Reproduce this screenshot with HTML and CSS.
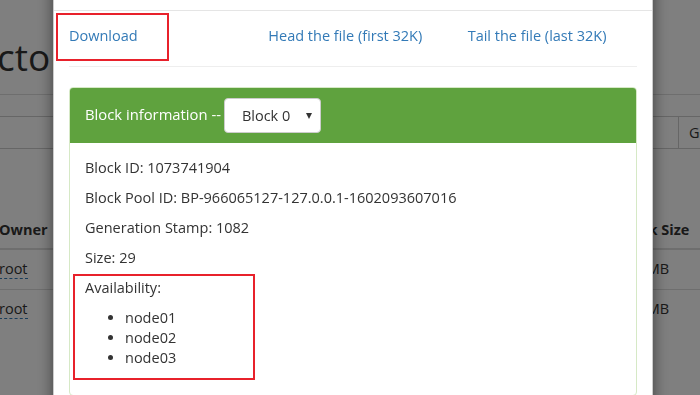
FILE: index.html
```html
<!DOCTYPE html>
<html lang="en">
<head>
<meta charset="UTF-8">
<meta name="viewport" content="width=device-width, initial-scale=1.0">
<link rel="stylesheet" href="styles.css">
<title>Browsing HDFS</title>
</head>
<body>
<div class="page">
  <div class="page-header">
    <h1>Browse Directory</h1>
  </div>
  <div class="search">
    <input class="search-input" type="text">
    <button class="search-go">Go!</button>
  </div>
  <table class="listing">
    <thead>
      <tr>
        <th class="col-perm">Permission</th>
        <th class="col-owner">Owner</th>
        <th class="col-group">Group</th>
        <th class="col-size">Size</th>
        <th class="col-mod">Last Modified</th>
        <th class="col-repl">Replication</th>
        <th class="col-block">Block Size</th>
        <th class="col-name">Name</th>
      </tr>
    </thead>
    <tbody>
      <tr>
        <td>-rw-r--r--</td>
        <td><span class="owner">root</span></td>
        <td>supergroup</td>
        <td>29 B</td>
        <td>Oct 08 01:22</td>
        <td>3</td>
        <td>128 MB</td>
        <td>a.txt</td>
      </tr>
      <tr>
        <td>-rw-r--r--</td>
        <td><span class="owner">root</span></td>
        <td>supergroup</td>
        <td>17 B</td>
        <td>Oct 08 01:20</td>
        <td>3</td>
        <td>128 MB</td>
        <td>b.txt</td>
      </tr>
    </tbody>
  </table>
</div>

<div class="backdrop"></div>

<div class="modal">
  <div class="modal-header">
    <span class="modal-close">&times;</span>
    <h4 class="modal-title">File information - a.txt</h4>
  </div>
  <div class="modal-body">
    <div class="links">
      <div class="links-col">
        <div class="mark-link"><a href="#">Download</a></div>
      </div>
      <div class="links-col"><a href="#">Head the file (first 32K)</a></div>
      <div class="links-col"><a href="#">Tail the file (last 32K)</a></div>
    </div>
    <hr>
    <div class="panel">
      <div class="panel-heading">
        <span class="panel-title">Block information --</span>
        <span class="select-wrap">
          <select class="block-select">
            <option>Block 0</option>
          </select>
        </span>
      </div>
      <div class="panel-body">
        <p>Block ID: 1073741904</p>
        <p>Block Pool ID: BP-966065127-127.0.0.1-1602093607016</p>
        <p>Generation Stamp: 1082</p>
        <p>Size: 29</p>
        <div class="mark-box">
          <p>Availability:</p>
          <ul>
            <li>node01</li>
            <li>node02</li>
            <li>node03</li>
          </ul>
        </div>
      </div>
    </div>
  </div>
</div>
</body>
</html>
```
FILE: styles.css
```css
body {
  margin: 0;
  font-family: "Open Sans", Arial, sans-serif;
  font-size: 14.5px;
  line-height: 20px;
  color: #333333;
  background-color: #ffffff;
  overflow: hidden;
}
.page-header {
  padding-bottom: 17px;
  border-bottom: 1px solid #dddddd;
}
h1 {
  margin: 37px 0 0 -213px;
  font-size: 37px;
  font-weight: 400;
  line-height: 40px;
  white-space: nowrap;
}
.search {
  display: flex;
  margin: 21px -40px 0 -20px;
}
.search-input {
  flex: 1;
  height: 33px;
  padding: 6px 12px;
  border: 1px solid #cccccc;
  font-family: inherit;
  font-size: 14px;
  box-sizing: border-box;
}
.search-go {
  width: 61px;
  height: 33px;
  padding: 0 0 0 10px;
  border: 1px solid #cccccc;
  border-left: none;
  background-color: #ffffff;
  color: #333333;
  font-family: inherit;
  font-size: 14.5px;
  text-align: left;
}
.listing {
  margin: 63px 0 0 -109px;
  border-collapse: collapse;
  table-layout: fixed;
  width: 909px;
}
.listing th,
.listing td {
  padding: 8px;
  text-align: left;
  white-space: nowrap;
  overflow: hidden;
  box-sizing: border-box;
}
.listing th {
  border-bottom: 2px solid #dddddd;
  font-weight: 700;
}
.listing td {
  padding: 9px 8px 10px;
  border-top: 1px solid #dddddd;
}
.col-perm { width: 100px; }
.col-owner { width: 80px; }
.col-group { width: 100px; }
.col-size { width: 100px; }
.col-mod { width: 200px; }
.col-repl { width: 139px; }
.col-block { width: 100px; }
.col-name { width: 90px; }
.owner {
  border-bottom: 1px dashed #337ab7;
}
.backdrop {
  position: fixed;
  top: 0;
  left: 0;
  right: 0;
  bottom: 0;
  background-color: rgba(0, 0, 0, 0.5);
}
.modal {
  position: fixed;
  top: -47px;
  left: 53px;
  width: 600px;
  background-color: #ffffff;
  border: 1px solid rgba(0, 0, 0, 0.2);
  border-radius: 6px;
  box-shadow: 0 5px 15px rgba(0, 0, 0, 0.5);
  box-sizing: border-box;
}
.modal-header {
  padding: 15px;
  border-bottom: 1px solid #e5e5e5;
}
.modal-title {
  margin: 0;
  font-size: 18px;
  font-weight: 500;
  line-height: 26px;
}
.modal-close {
  float: right;
  font-size: 21px;
  font-weight: 700;
  line-height: 26px;
  opacity: 0.2;
}
.modal-body {
  padding: 15px;
}
.links {
  display: flex;
  margin: 0 -15px;
}
.links-col {
  flex: 1;
  padding: 0 15px;
}
a {
  color: #337ab7;
  text-decoration: none;
}
.mark-link {
  width: 113px;
  height: 48px;
  margin: -13px 0 -15px -13px;
  padding: 11px;
  border: 2px solid #e8212b;
  box-sizing: border-box;
}
hr {
  margin: 20px 0;
  border: 0;
  border-top: 1px solid #eeeeee;
}
.panel {
  border: 1px solid #d6e9c6;
  border-radius: 4px;
}
.panel-heading {
  display: flex;
  align-items: center;
  gap: 3px;
  padding: 10px 15px;
  background-color: #5fa23e;
  color: #ffffff;
  border-radius: 3px 3px 0 0;
}
.panel-title {
  font-size: 14.8px;
  margin-top: -3px;
}
.select-wrap {
  position: relative;
  display: inline-block;
}
.select-wrap::after {
  content: "";
  position: absolute;
  right: 9px;
  top: 15px;
  border-left: 3.5px solid transparent;
  border-right: 3.5px solid transparent;
  border-top: 6px solid #333333;
}
.block-select {
  appearance: none;
  -webkit-appearance: none;
  width: 97px;
  height: 35px;
  padding: 0 20px 0 17px;
  border: 1px solid #cccccc;
  border-radius: 4px;
  background-color: #ffffff;
  color: #333333;
  font-family: inherit;
  font-size: 14.5px;
}
.panel-body {
  padding: 15px;
}
p {
  margin: 0 0 10px;
}
ul {
  margin: 0;
  padding-left: 40px;
}
.mark-box {
  width: 182px;
  margin: -4px 0 0 -12px;
  padding: 2px 0 10px 10px;
  border: 2px solid #e8212b;
  box-sizing: border-box;
}
```
